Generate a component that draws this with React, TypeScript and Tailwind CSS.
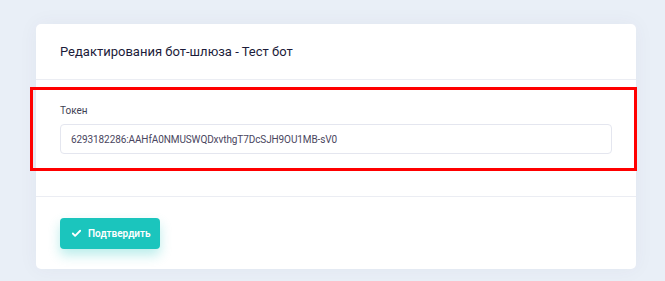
import { Check } from 'lucide-react';

const App = () => {
  return (
    <div
      className="relative min-h-screen w-full bg-[#e9eff7] pt-[24px] pl-[36px]"
      style={{ fontFamily: 'Roboto, "Noto Sans", sans-serif' }}
    >
      <div className="w-[600px] rounded-[5px] bg-white shadow-[0_0_20px_0_rgba(82,63,105,0.05)]">
        {/* header */}
        <div className="flex h-[56px] items-center border-b border-[#ebedf3] px-6">
          <h3 className="text-[13px] font-normal text-[#1c1c3a]">Редактирования бот-шлюза - Тест бот</h3>
        </div>

        {/* body */}
        <div className="border-b border-[#ebedf3] px-6 pt-[24px] pb-[42px]">
          <label className="mb-[6px] block text-[10px] leading-[14px] text-[#3f4254]">Токен</label>
          <div className="flex h-[30px] items-center rounded-[4px] border border-[#e4e6ef] px-[10px] text-[10px] tracking-[-0.1px] text-[#4a4660]">
            6293182286:AAHfA0NMUSWQDxvthgT7DcSJH9OU1MB-sV0
          </div>
        </div>

        {/* footer */}
        <div className="px-6 pt-[21px] pb-[20px]">
          <button className="flex h-[31px] w-[100px] items-center gap-[6px] rounded-[4px] bg-[#1bc5bd] pl-[11px] text-[10px] font-semibold text-white shadow-[0_6px_12px_0_rgba(27,197,189,0.3)]">
            <Check size={11} strokeWidth={4} />
            Подтвердить
          </button>
        </div>
      </div>

      {/* annotation */}
      <div className="pointer-events-none absolute left-[30px] top-[87px] h-[84px] w-[607px] border-[3px] border-[#ff0000]" />
    </div>
  );
};

export default App;
